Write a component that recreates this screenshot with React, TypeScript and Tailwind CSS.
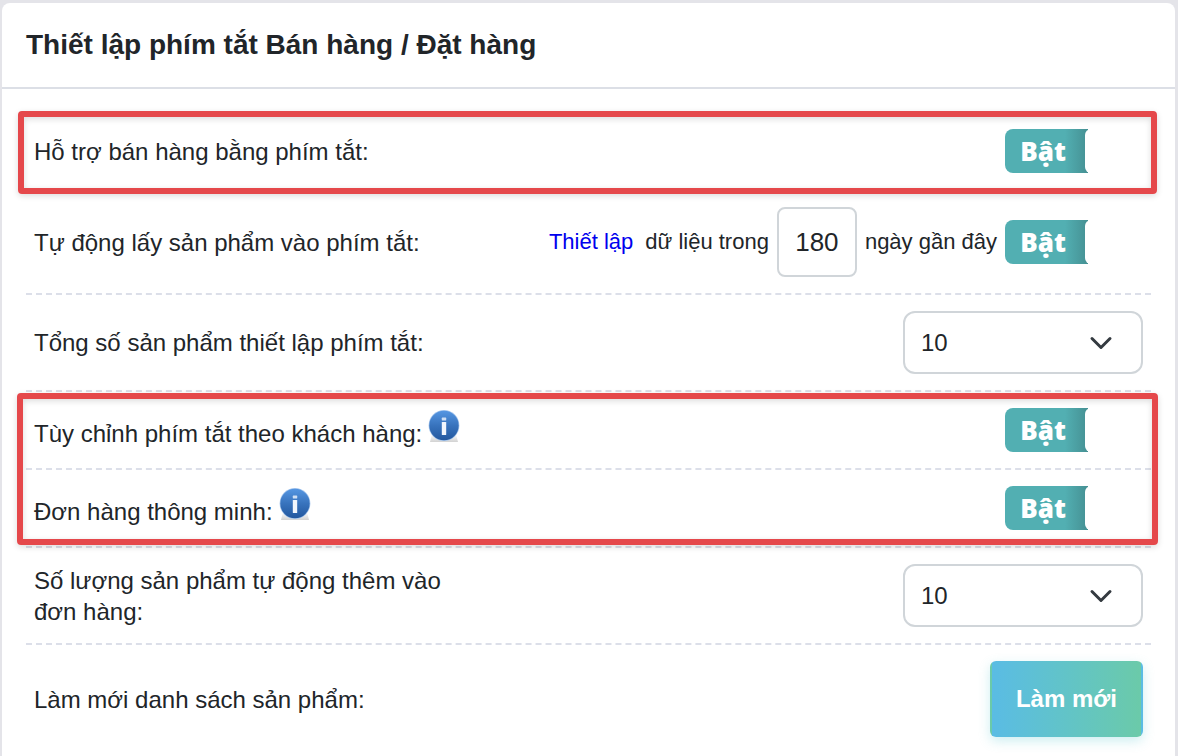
import { useId, useState } from "react";
import type { ReactNode } from "react";

const quantities = ["5", "10", "15", "20"];

function InfoIcon() {
  return (
    <svg viewBox="0 0 32 32" className="block h-8 w-8" aria-hidden="true">
      <defs>
        <linearGradient id="info-fill" x1="0" y1="0" x2="0" y2="1">
          <stop offset="0" stopColor="#5596e2" />
          <stop offset="0.5" stopColor="#3873bd" />
          <stop offset="1" stopColor="#23589f" />
        </linearGradient>
        <linearGradient id="info-shade" x1="0" y1="0" x2="0" y2="1">
          <stop offset="0" stopColor="#ffffff" />
          <stop offset="1" stopColor="#d2d2d2" />
        </linearGradient>
      </defs>
      <path d="M4 24h24l2 8H2z" fill="url(#info-shade)" />
      <circle cx="16" cy="15.5" r="15.4" fill="#a9c8ee" />
      <circle cx="16" cy="15.5" r="14.7" fill="url(#info-fill)" />
      <rect x="13.8" y="7.6" width="4.4" height="3" rx="0.6" fill="#cfdff4" />
      <rect x="13.8" y="12" width="4.4" height="13" rx="0.6" fill="#f1f6fd" />
    </svg>
  );
}

function InfoButton() {
  return (
    <button type="button" aria-label="Thông tin" className="ml-1.5 h-8 w-8 shrink-0">
      <InfoIcon />
    </button>
  );
}

function Toggle({ label }: { label: string }) {
  const [on, setOn] = useState(true);

  return (
    <label className="flex h-11 w-[138px] shrink-0 cursor-pointer overflow-hidden rounded-lg">
      <input
        type="checkbox"
        aria-label={label}
        className="sr-only"
        checked={on}
        onChange={(e) => setOn(e.target.checked)}
      />
      <span
        className={`flex w-full ${
          on
            ? "bg-[linear-gradient(to_right,#52afb2_60px,#459093_83px,#ffffff_83px)]"
            : "flex-row-reverse bg-gray-300"
        }`}
      >
        <span className="flex w-20 items-center justify-center pr-1 font-['Open_Sans',sans-serif] text-[26px] font-extrabold leading-none text-white">
          {on ? "Bật" : "Tắt"}
        </span>
        <span className="flex-1 rounded-md bg-white" />
      </span>
    </label>
  );
}

function QuantitySelect({ id }: { id: string }) {
  return (
    <div className="grid w-60 items-center">
      <select
        id={id}
        defaultValue="10"
        className="col-start-1 row-start-1 h-[63px] w-full appearance-none rounded-xl border-2 border-[#d0d5d9] bg-white px-4 text-2xl"
      >
        {quantities.map((q) => (
          <option key={q}>{q}</option>
        ))}
      </select>
      <svg
        viewBox="0 0 16 16"
        className="pointer-events-none col-start-1 row-start-1 mr-[30px] h-6 w-6 justify-self-end"
        fill="none"
        stroke="#343a40"
        strokeWidth="2"
        strokeLinecap="round"
        strokeLinejoin="round"
        aria-hidden="true"
      >
        <path d="m2 5 6 6 6-6" />
      </svg>
    </div>
  );
}

type RowProps = {
  label: string;
  htmlFor?: string;
  info?: boolean;
  last?: boolean;
  children: ReactNode;
};

function Row({ label, htmlFor, info, last, children }: RowProps) {
  return (
    <div
      className={`flex items-center justify-between px-2 py-4 ${
        last ? "" : "border-b-2 border-dashed border-[#dcdfe9]"
      }`}
    >
      <div className={`flex w-[39%] leading-[31px] ${info ? "items-start pb-0.5" : "items-center"}`}>
        {htmlFor ? (
          <label htmlFor={htmlFor}>{label}</label>
        ) : (
          <span className={info ? "pt-2" : ""}>{label}</span>
        )}
        {info && <InfoButton />}
      </div>
      <div className="flex items-center">{children}</div>
    </div>
  );
}

export default function App() {
  const daysId = useId();
  const totalId = useId();
  const autoId = useId();

  return (
    <div className="min-h-screen bg-[#e4e4e9] pt-[3px] pr-[3px] pl-0.5 font-['Liberation_Sans',Arial,sans-serif] text-2xl text-[#212529]">
      <main className="min-h-[calc(100vh-3px)] rounded-t-lg bg-white">
        <header className="border-b-2 border-[#dcdfe6] px-6 py-[22px]">
          <h1 className="text-[28px] font-bold leading-10">
            Thiết lập phím tắt Bán hàng / Đặt hàng
          </h1>
        </header>

        <div className="px-6 pt-6">
          {/* Highlighted: shortcut support */}
          <div className="relative">
            <Row label="Hỗ trợ bán hàng bằng phím tắt:">
              <Toggle label="Hỗ trợ bán hàng bằng phím tắt" />
            </Row>
            <div className="pointer-events-none absolute -top-0.5 -right-1.5 -bottom-[3px] -left-2 rounded-sm border-[6px] border-[#e5484b] shadow-[0_2px_6px_rgba(0,0,0,0.14),inset_0_2px_6px_rgba(0,0,0,0.14)]" />
          </div>

          <Row label="Tự động lấy sản phẩm vào phím tắt:">
            <a href="#thiet-lap" className="mr-3 text-[22px] text-[#0000ee]">
              Thiết lập
            </a>
            <label htmlFor={daysId} className="mr-2 text-[22px]">
              dữ liệu trong
            </label>
            <input
              id={daysId}
              type="text"
              inputMode="numeric"
              defaultValue="180"
              className="h-[70px] w-20 rounded-lg border-2 border-[#d0d5d9] text-center text-[26px]"
            />
            <span className="mx-2 text-[22px]">ngày gần đây</span>
            <Toggle label="Tự động lấy sản phẩm vào phím tắt" />
          </Row>

          <Row label="Tổng số sản phẩm thiết lập phím tắt:" htmlFor={totalId}>
            <QuantitySelect id={totalId} />
          </Row>

          {/* Highlighted: per-customer shortcuts and smart orders */}
          <div className="relative">
            <Row label="Tùy chỉnh phím tắt theo khách hàng:" info>
              <Toggle label="Tùy chỉnh phím tắt theo khách hàng" />
            </Row>
            <Row label="Đơn hàng thông minh:" info>
              <Toggle label="Đơn hàng thông minh" />
            </Row>
            <div className="pointer-events-none absolute top-px -right-[7px] bottom-[3px] -left-[9px] rounded-sm border-[6px] border-[#e5484b] shadow-[0_2px_6px_rgba(0,0,0,0.14),inset_0_2px_6px_rgba(0,0,0,0.14)]" />
          </div>

          <Row label="Số lượng sản phẩm tự động thêm vào đơn hàng:" htmlFor={autoId}>
            <QuantitySelect id={autoId} />
          </Row>

          <Row label="Làm mới danh sách sản phẩm:" last>
            <button
              type="button"
              className="h-[76px] rounded-md border-2 border-transparent bg-linear-to-r from-[#5abce4] to-[#6bcaa9] px-6 font-bold text-white shadow-[0_4px_12px_rgba(90,200,210,0.3)]"
            >
              Làm mới
            </button>
          </Row>
        </div>
      </main>
    </div>
  );
}
